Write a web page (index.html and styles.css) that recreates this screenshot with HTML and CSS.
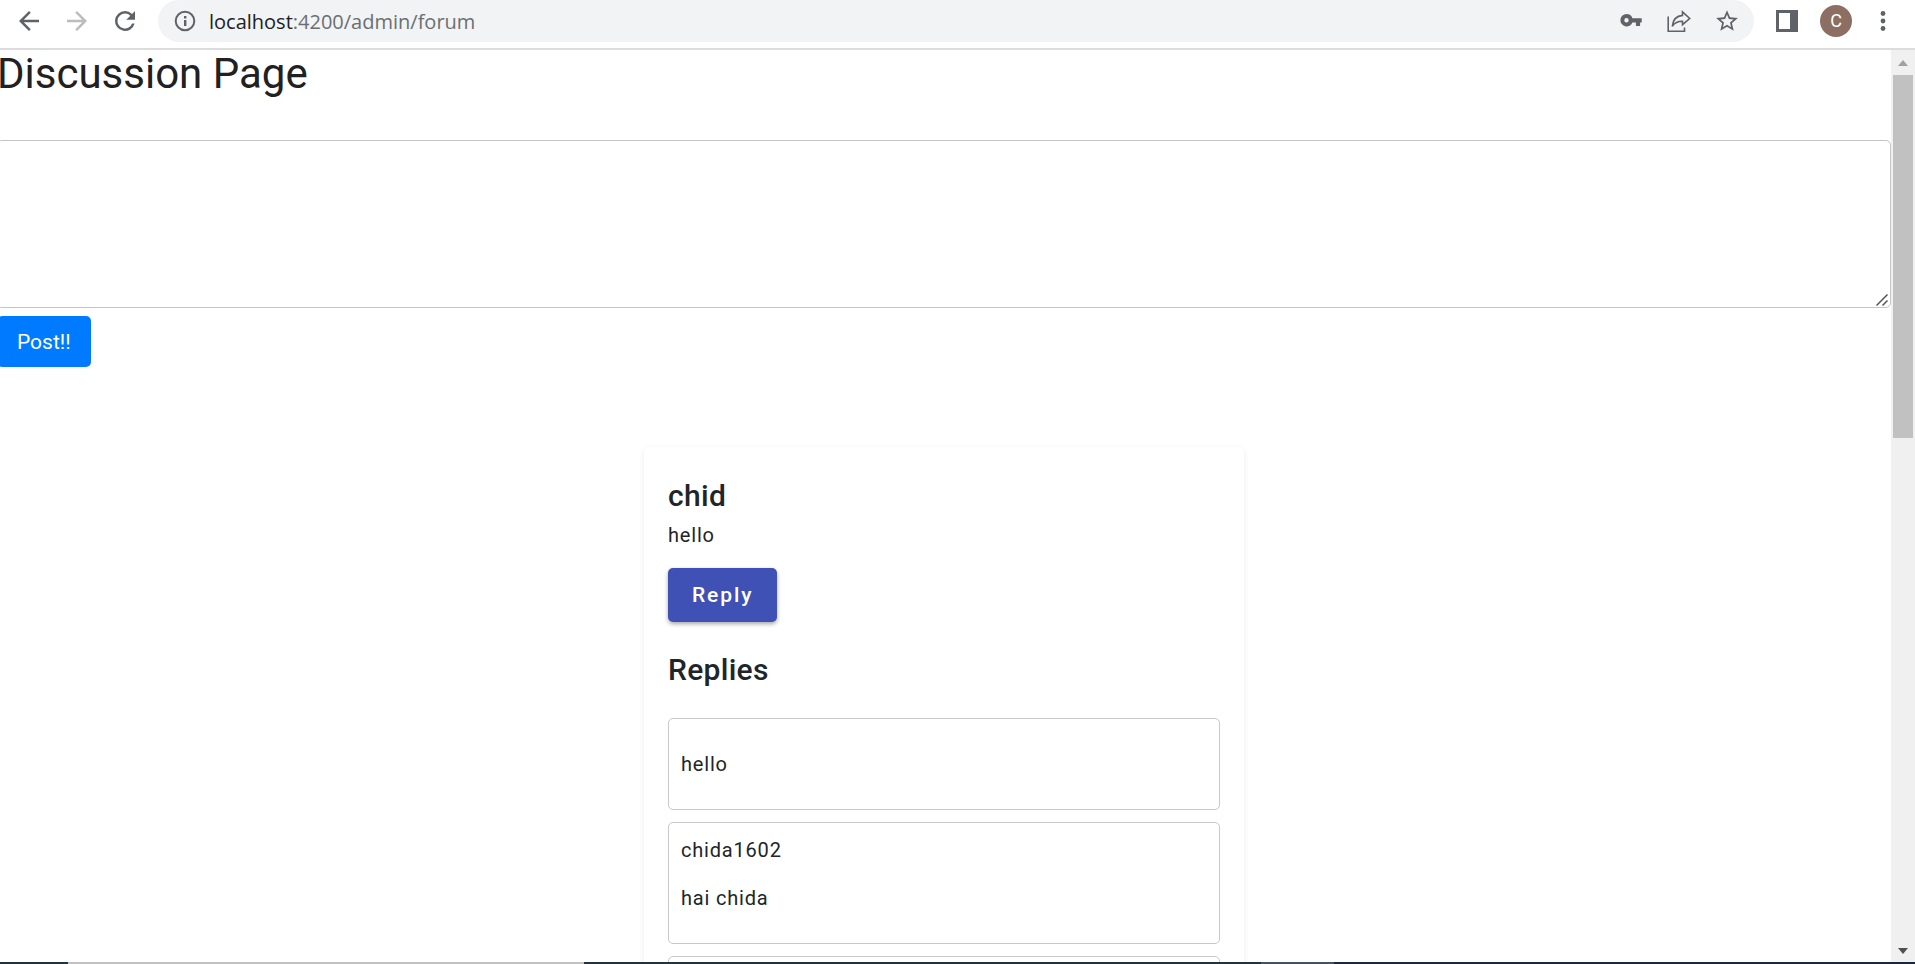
FILE: index.html
```html
<!DOCTYPE html>
<html lang="en">
<head>
<meta charset="utf-8">
<title>Discussion Page</title>
<link rel="stylesheet" href="styles.css">
</head>
<body>
<header class="toolbar">
  <button class="tool" aria-label="Back"><svg class="icon-lg" viewBox="0 0 24 24"><path d="M20 11H7.8l5.6-5.6L12 4l-8 8 8 8 1.4-1.4L7.8 13H20z"/></svg></button>
  <button class="tool tool-off" aria-label="Forward" disabled><svg class="icon-lg" viewBox="0 0 24 24"><path d="M12 4l-1.4 1.4 5.6 5.6H4v2h12.200l-5.600 5.600L12 20l8-8z"/></svg></button>
  <button class="tool" aria-label="Reload"><svg class="icon-lg" viewBox="0 0 24 24"><path d="M17.650 6.350A7.960 7.960 0 0 0 12 4a8 8 0 1 0 7.730 10h-2.080A6 6 0 1 1 12 6c1.660 0 3.140.69 4.220 1.780L13 11h7V4z"/></svg></button>
  <div class="address">
    <svg class="icon-md" viewBox="0 0 26 26"><circle cx="13" cy="13" r="9.300" fill="none" stroke="currentColor" stroke-width="2"/><path d="M12 8h2.400v2.400H12zM12 12h2.400v6H12z"/></svg>
    <div class="url" role="textbox" contenteditable="true" aria-label="Address">localhost<span class="url-rest">:4200/admin/forum</span></div>
    <button class="tool" aria-label="Passwords"><svg class="icon-md" viewBox="0 0 26 26"><path fill-rule="evenodd" d="M8.500 6a6.200 6.200 0 0 1 5.900 4.200H23.700v4.200h-1.600V18h-4.200v-3.600h-3.500A6.200 6.200 0 1 1 8.500 6zm0 4.100a2.200 2.200 0 1 0 0 4.400 2.200 2.200 0 0 0 0-4.400z"/></svg></button>
    <button class="tool" aria-label="Share"><svg class="icon-md line" viewBox="0 0 26 26"><path d="M2.200 8.500V23.300H18.500V19.500"/><path d="M16.500 3.800L23.700 10.500 16.500 16.700V13.300C11.500 13.200 8.800 14.600 6.300 18.300 6.900 12 10.500 7.900 16.500 7.400Z"/></svg></button>
    <button class="tool" aria-label="Bookmark"><svg class="icon-md" viewBox="0 0 24 24"><path d="M22 9.240l-7.190-.62L12 2 9.190 8.630 2 9.240l5.460 4.730L5.820 21 12 17.270 18.180 21l-1.630-7.030zM12 15.400l-3.760 2.270 1-4.280-3.320-2.880 4.380-.38L12 6.100l1.710 4.040 4.380.38-3.320 2.880 1 4.280z"/></svg></button>
  </div>
  <button class="tool" aria-label="Side panel"><svg class="icon-lg" viewBox="0 0 30 30"><path fill-rule="evenodd" d="M4 4h22v22H4zM7 7v16h11V7z"/></svg></button>
  <button class="avatar" aria-label="Profile">C</button>
  <button class="tool" aria-label="Menu"><svg class="icon-md" viewBox="0 0 26 26"><circle cx="13" cy="5.500" r="2.400"/><circle cx="13" cy="13" r="2.400"/><circle cx="13" cy="20.500" r="2.400"/></svg></button>
</header>
<div class="viewport">
  <main class="page">
    <h1 class="title">Discussion Page</h1>
    <form class="composer">
      <textarea class="message" aria-label="New post"></textarea>
      <svg class="grip" viewBox="0 0 12 12"><path d="M.5 11.500L11.500.5M6.500 11.500l5-5"/></svg>
      <button class="post" type="button">Post!!</button>
    </form>
    <article class="card">
      <h2 class="card-title">chid</h2>
      <div class="text">hello</div>
      <button class="reply">Reply</button>
      <h2 class="card-title replies-title">Replies</h2>
      <div class="replies">
        <div class="item"><p class="text">hello</p></div>
        <div class="item"><div class="text">chida1602</div><p class="text">hai chida</p></div>
        <div class="item"><p class="text"></p></div>
      </div>
    </article>
  </main>
  <div class="scrollbar">
    <svg class="arrow arrow-up" viewBox="0 0 10 6"><path d="M0 6L5 0l5 6z"/></svg>
    <div class="track"><div class="thumb"></div></div>
    <svg class="arrow" viewBox="0 0 10 6"><path d="M0 0h10L5 6z"/></svg>
  </div>
</div>
<footer class="edge"><span class="edge-light"></span><span class="edge-mid"></span><span class="edge-active"></span><span class="edge-end"></span></footer>
</body>
</html>
```
FILE: styles.css
```css
* { box-sizing: border-box; }
body {
  margin: 0;
  height: 100vh;
  display: flex;
  flex-direction: column;
  overflow: hidden;
  background: #fff;
  color: #212529;
  font-family: Roboto, sans-serif;
  font-size: 20px;
  line-height: 30px;
}
button { font: inherit; border: 0; padding: 0; cursor: pointer; }
svg { display: block; fill: currentColor; }

.toolbar {
  display: flex;
  align-items: center;
  gap: 18px;
  padding: 0 19px 6px 14px;
  border-bottom: 2px solid #dcdcdc;
  color: #5f6368;
}
.tool { flex: none; background: none; color: inherit; }
.tool-off { color: #babcbe; }
.icon-lg { width: 30px; height: 30px; }
.icon-md { width: 26px; height: 26px; flex: none; }
.line { fill: none; stroke: currentColor; stroke-width: 1.600; }
.address {
  flex: 1;
  display: flex;
  align-items: center;
  gap: 22px;
  height: 42px;
  padding: 0 14px;
  border-radius: 21px;
  background: #f1f3f4;
}
.url {
  flex: 1;
  margin-left: -11px;
  padding-top: 2px;
  color: #202124;
  font-family: "Open Sans", sans-serif;
  font-size: 20px;
  white-space: nowrap;
}
.url-rest { color: #6b6f73; }
.avatar {
  flex: none;
  width: 32px;
  height: 32px;
  border-radius: 50%;
  background: #8d6e63;
  color: #fff;
  font-size: 18px;
}

.viewport { flex: 1; min-height: 0; display: flex; overflow: hidden; }
.page { flex: 1; margin-left: -3px; }
.title {
  margin: 0 0 42px;
  font-size: 42px;
  line-height: 48px;
  font-weight: 400;
  color: #212121;
}
.composer { position: relative; margin-bottom: 80px; }
.message {
  display: block;
  width: 100%;
  height: 168px;
  margin-bottom: 8px;
  padding: 12px;
  border: 1px solid #c4c4c4;
  border-radius: 5px;
  font: inherit;
  resize: none;
}
.grip {
  position: absolute;
  top: 154px;
  right: 3px;
  width: 12px;
  height: 12px;
  fill: none;
  stroke: #555;
  stroke-width: 1.500;
}
.post {
  display: block;
  padding: 11px 20px 10px;
  border-radius: 5px;
  background: #007bff;
  color: #fff;
  font-size: 21px;
}
.card {
  max-width: 600px;
  margin: 0 auto;
  padding: 30px 24px;
  border-radius: 5px;
  box-shadow: 0 2px 6px rgba(0, 0, 0, .08);
}
.card-title {
  margin: 0 0 5px;
  font-size: 30px;
  line-height: 38px;
  font-weight: 500;
  letter-spacing: .01em;
}
.text { letter-spacing: .04em; }
.reply {
  display: block;
  margin: 18px 0 29px;
  padding: 12px 24px;
  border-radius: 5px;
  background: #3f51b5;
  color: #fff;
  font-size: 21px;
  font-weight: 500;
  letter-spacing: .09em;
  box-shadow: 0 2px 4px rgba(0, 0, 0, .35);
}
.replies-title { margin-bottom: 29px; }
.replies { display: grid; gap: 12px; }
.item {
  padding: 12px;
  border: 1px solid #c8c8c8;
  border-radius: 5px;
}
.item p { display: flow-root; margin: 18px 0; min-height: 30px; }

.scrollbar {
  flex: none;
  width: 24px;
  display: flex;
  flex-direction: column;
  align-items: center;
  gap: 9px;
  padding: 10px 2px 8px;
  background: #f0f0f0;
}
.arrow { flex: none; width: 10px; height: 6px; color: #505050; }
.arrow-up { color: #a0a0a0; }
.track { flex: 1; width: 100%; }
.thumb { height: 42%; background: #c1c1c1; }

.edge {
  display: grid;
  grid-template-columns: 68fr 516fr 677fr 73fr 581fr;
  height: 2px;
  background: #20333f;
}
.edge-light { grid-column: 2; background: #c2c2c2; }
.edge-active { background: #445262; }
.edge-end { background: #1b2740; }
```
